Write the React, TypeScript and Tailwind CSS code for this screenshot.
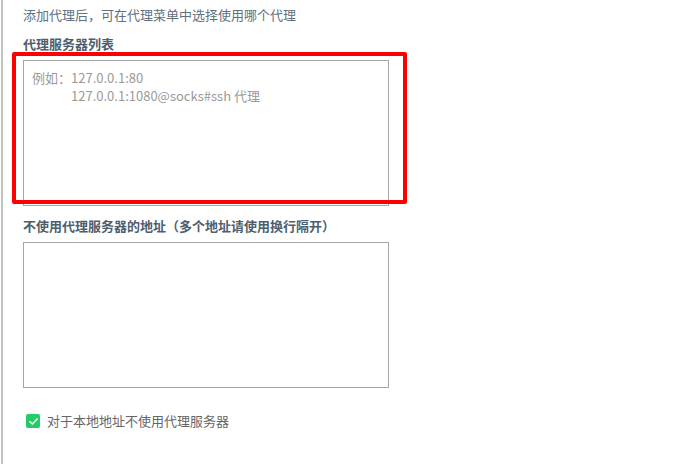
import React from "react";

export default function App() {
  const font = { fontFamily: '"Noto Sans CJK SC", "Noto Sans", sans-serif' };
  return (
    <div className="relative w-[689px] h-[464px] bg-white overflow-hidden" style={font}>
      <div className="absolute left-[1px] top-0 w-[2px] h-full bg-[#c4c4c4]" />
      <div className="flex flex-col pl-[23px] pt-[5px]">
        <div className="text-[13px] leading-[20px] text-[#607080]">添加代理后，可在代理菜单中选择使用哪个代理</div>
        <div className="mt-[9px] text-[13px] leading-[20px] font-bold text-[#4e5e6e]">代理服务器列表</div>
        <textarea
          className="mt-[6px] w-[366px] h-[146px] border border-[#a6a6a6] px-[8px] pt-[8px] text-[13px] leading-[18px] text-[#333] placeholder:text-[#9a9a9a] resize-none outline-none"
          placeholder={"例如：127.0.0.1:80\n　　　127.0.0.1:1080@socks#ssh 代理"}
        />
        <div className="mt-[10px] text-[13px] leading-[20px] font-bold text-[#4e5e6e]">不使用代理服务器的地址（多个地址请使用换行隔开）</div>
        <textarea className="mt-[6px] w-[366px] h-[146px] border border-[#a6a6a6] resize-none outline-none" />
        <label className="mt-[23px] ml-[3px] flex items-center gap-[7px]">
          <span className="w-[14px] h-[14px] rounded-[2px] bg-[#22cc66] flex items-center justify-center">
            <svg width="11" height="11" viewBox="0 0 10 10">
              <path d="M1.8 5.2 L4 7.3 L8.3 2.8" fill="none" stroke="white" strokeWidth="1.4" strokeLinecap="round" strokeLinejoin="round" />
            </svg>
          </span>
          <span className="text-[13px] leading-[20px] text-[#666]">对于本地地址不使用代理服务器</span>
        </label>
      </div>
      <div className="absolute left-[12px] top-[52px] w-[395px] h-[152px] border-[4px] border-[#ff0000] rounded-[2px] pointer-events-none" />
    </div>
  );
}
